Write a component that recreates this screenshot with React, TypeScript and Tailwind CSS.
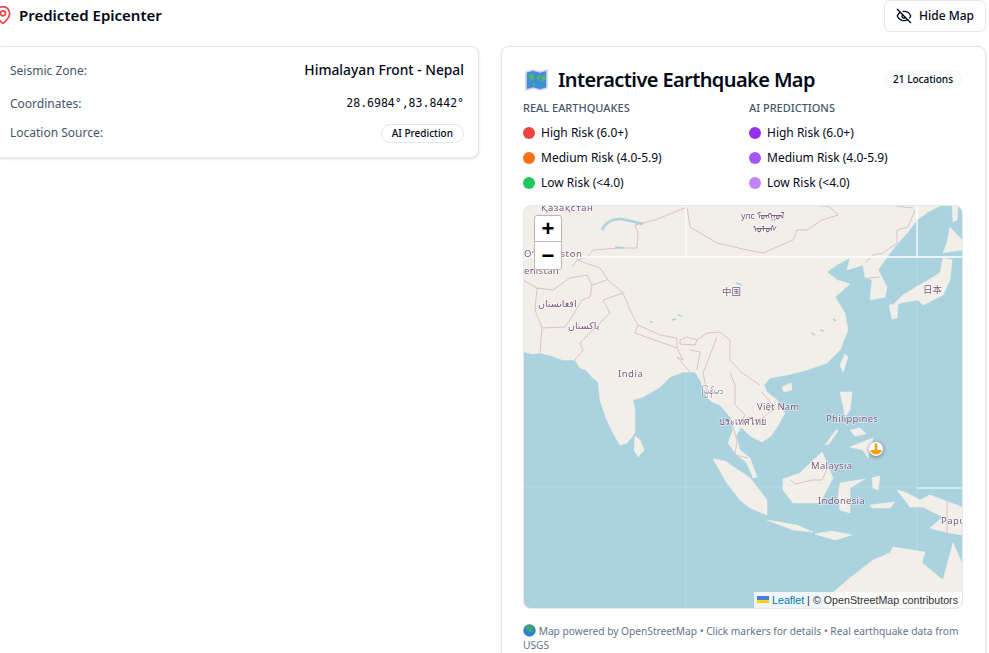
import { EyeOff, MapPin } from "lucide-react";

const realLegend = [
  { label: "High Risk (6.0+)", color: "bg-[#ef4444]" },
  { label: "Medium Risk (4.0-5.9)", color: "bg-[#f97316]" },
  { label: "Low Risk (<4.0)", color: "bg-[#22c55e]" },
];

const aiLegend = [
  { label: "High Risk (6.0+)", color: "bg-[#9333ea]" },
  { label: "Medium Risk (4.0-5.9)", color: "bg-[#a855f7]" },
  { label: "Low Risk (<4.0)", color: "bg-[#c084fc]" },
];

const land = [
  // mainland asia
  "M524 352 L532 354 L540 353 L552 356 L563 360 L575 360 L580 368 L586 370 L592 377 L598 382 L600 400 L606 418 L613 433 L620 445 L627 443 L632 437 L635 432 L635 410 L633 400 L643 397 L652 392 L660 387 L670 377 L683 372 L695 372 L700 380 L704 390 L707 397 L712 402 L720 405 L726 412 L730 417 L733 430 L728 443 L737 455 L747 463 L753 478 L757 477 L750 458 L740 450 L736 436 L741 427 L750 436 L762 442 L771 436 L777 427 L785 413 L777 400 L767 392 L764 385 L770 378 L787 375 L807 370 L827 363 L840 350 L848 330 L845 313 L835 297 L843 290 L850 284 L837 280 L827 272 L838 264 L850 258 L847 270 L863 265 L865 277 L872 280 L870 300 L885 297 L887 287 L878 270 L890 253 L898 243 L908 232 L917 220 L928 212 L940 206 L524 206 Z",
  // sakhalin, hokkaido
  "M952 206 L958 206 L957 220 L953 222 Z",
  "M950 227 L962 240 L962 250 L943 253 L947 243 Z",
  // honshu, kyushu
  "M943 258 L952 260 L950 280 L943 295 L923 305 L918 300 L905 302 L893 305 L903 295 L923 283 L940 273 Z",
  "M889 305 L898 304 L897 318 L892 319 Z",
  // taiwan, hainan
  "M845 354 L848 357 L843 372 L840 365 Z",
  "M782 387 L791 383 L792 390 L784 392 Z",
  // luzon, palawan, visayas, mindanao
  "M840 392 L852 392 L850 410 L845 417 L843 405 Z",
  "M825 445 L836 430 L838 431 L829 444 Z",
  "M850 430 L860 428 L866 434 L855 436 Z",
  "M850 447 L873 438 L868 458 L863 450 Z",
  // sri lanka, sumatra
  "M635 436 L640 440 L644 450 L638 457 L634 450 Z",
  "M713 459 L725 461 L750 478 L767 500 L767 515 L750 508 L740 500 L727 483 Z",
  // borneo, sulawesi
  "M783 479 L800 473 L822 452 L833 478 L820 503 L793 503 L783 490 Z",
  "M840 483 L865 479 L850 488 L850 513 L840 510 L838 497 Z",
  // java, lesser sunda
  "M767 520 L797 525 L813 532 L793 530 Z",
  "M815 534 L832 531 L852 535 L835 540 Z",
  "M872 478 L880 476 L878 490 L873 488 Z",
  "M870 505 L895 502 L890 508 L872 508 Z",
  // new guinea
  "M897 490 L907 493 L920 500 L930 495 L962 507 L962 535 L950 533 L937 530 L930 528 L943 517 L923 507 L910 507 Z",
  // australia
  "M830 595 L850 578 L873 560 L890 553 L893 547 L925 552 L922 563 L943 580 L953 543 L962 563 L962 609 L830 609 Z",
];

const borders = [
  "M587 257 L593 250 L620 248 L637 248 L638 233 L635 225 L655 220 L687 207 L690 227 L717 243 L747 250 L763 253 L793 240 L797 230 L807 230 L822 220 L838 215 L830 207 L817 205",
  "M895 206 L913 208 M915 210 L908 227 L897 230 L897 243 L883 253 L873 255 L865 263",
  "M572 267 L577 260 L587 257",
  "M523 280 L537 288 L553 290 L570 278 L587 275 L592 285 L607 280",
  "M577 260 L600 268 L608 280 L623 293 L603 300 L610 313 L580 343 L583 350 L575 360",
  "M592 285 L590 297 L582 300 L573 315 L565 327 L542 328",
  "M537 288 L535 310 L542 328 L540 353",
  "M623 293 L630 310 L638 325 L635 333 L677 348 L677 338 L660 335 L638 325",
  "M680 340 L687 337 L697 340 L695 345 L680 344 Z",
  "M697 340 L707 333 L720 332 L730 340 L730 360 L742 373 L760 385",
  "M717 337 L703 373 L707 392",
  "M677 348 L683 360 L677 357 L690 372 M690 350 L700 352 L697 370",
  "M730 372 L735 385 L735 405 L745 415 L742 420 L760 420 L775 408 L762 392",
  "M730 417 L737 440 L735 455 L748 458",
  "M791 480 L795 484 L812 480 L822 480 L828 467",
  "M947 501 L947 535",
  "M868 278 L880 277",
];

function EmojiMap() {
  return (
    <svg width="26" height="24" viewBox="0 0 26 24" className="shrink-0">
      <path d="M3 4 L10 2 L17 4 L24 2 L24 20 L17 22 L10 20 L3 22 Z" fill="#3d8fd6" stroke="#d9d2ee" strokeWidth="1.6" />
      <path d="M5 7 L10 6 L12 9 L9 13 L7 11 Z M14 8 L17 7 L17 11 L15 13 Z M18 9 L22 7 L23 11 L19 14 Z M10 15 L12 15 L12 18 L10 18 Z" fill="#52b56f" />
    </svg>
  );
}

function EmojiGlobe() {
  return (
    <svg width="13" height="13" viewBox="0 0 12 12" className="inline-block align-[-2px]">
      <circle cx="6" cy="6" r="5.7" fill="#2f7fd8" />
      <path d="M3 1.5 L7 0.8 L10 3.5 L9 7 L6 8 L4 6 L2 5 Z" fill="#3fa56a" />
    </svg>
  );
}

function QuakeMap() {
  return (
    <div className="relative h-[404px] w-full overflow-hidden rounded-lg border border-[#e2e8f0] bg-[#aad3df]">
      <svg viewBox="524 206 438 402" className="h-full w-full blur-[0.35px]">
        {land.map((d, i) => (
          <path key={i} d={d} fill="#f2efe9" stroke="#f2efe9" strokeWidth="0.6" strokeLinejoin="round" />
        ))}
        <path d="M602 230 Q607 218 622 219 L643 224" fill="none" stroke="#aad3df" strokeWidth="2.5" />
        <path d="M615 247 L625 248 M736 283 L742 285 M678 315 L682 316 M650 322 L653 322 M672 320 L676 319 M820 330 L824 331 M833 319 L836 321 M811 333 L815 335" fill="none" stroke="#aad3df" strokeWidth="1.5" />
        {borders.map((d, i) => (
          <path key={i} d={d} fill="none" stroke="#d3bccd" strokeWidth="0.9" strokeLinejoin="round" />
        ))}
        <path d="M686 206 L686 257 M524 257 L962 257 M917 206 L917 257" stroke="#ffffff" strokeWidth="1.3" />
        <path d="M686 257 L686 609 M917 257 L917 609 M524 487 L917 487" stroke="#ffffff" strokeWidth="0.5" opacity="0.35" />
        <path d="M917 488 L962 488" stroke="#d6f6f8" strokeWidth="1.6" />
        <g fill="#7b5a7d" stroke="#ffffff" strokeOpacity="0.6" strokeWidth="1.4" paintOrder="stroke" fontFamily="'Noto Sans', 'DejaVu Sans', 'Noto Sans CJK SC', sans-serif" fontSize="9.5">
          <text x="541" y="211" letterSpacing="0.6">Қазақстан</text>
          <text x="524" y="257" letterSpacing="0.6">Oʻzbekiston</text>
          <text x="524" y="274" letterSpacing="0.3">enistan</text>
          <text x="538" y="307">افغانستان</text>
          <text x="568" y="329">پاکستان</text>
          <text x="618" y="377" letterSpacing="0.5">India</text>
          <text x="702" y="394">မြန်မာ</text>
          <text x="719" y="425" fontSize="9">ประเทศไทย</text>
          <text x="757" y="410" letterSpacing="0.2">Việt Nam</text>
          <text x="722" y="295">中国</text>
          <text x="923" y="293">日本</text>
          <text x="826" y="422" letterSpacing="0.3">Philippines</text>
          <text x="811" y="469" letterSpacing="0.3">Malaysia</text>
          <text x="818" y="504" letterSpacing="0.3">Indonesia</text>
          <text x="941" y="524" letterSpacing="0.5">Papu</text>
          <text x="741" y="219" fontSize="9">улс ᠮᠣᠩᠭᠣᠯ</text>
          <text x="753" y="232" fontSize="9">ᠤᠯᠤᠰ</text>
        </g>
      </svg>

      <div className="absolute left-[10px] top-[9px] flex w-[28px] flex-col overflow-hidden rounded-[3px] border border-[#b9b9b9] bg-white text-black">
        <div className="flex h-[26px] items-center justify-center border-b border-[#b9b9b9] font-['Liberation_Sans',sans-serif] text-[22px] font-bold leading-none">+</div>
        <div className="flex h-[27px] items-center justify-center font-['Liberation_Sans',sans-serif] text-[22px] font-bold leading-none">−</div>
      </div>

      <svg width="16" height="16" viewBox="0 0 16 16" className="absolute left-[344px] top-[235px] drop-shadow-[0_1px_2px_rgba(0,0,0,0.45)]">
        <circle cx="8" cy="8" r="7" fill="#ffffff" />
        <path d="M2.2 9 H13.8 A6 6 0 0 1 2.2 9 Z" fill="#f59e0b" />
        <path d="M6.7 2.5 H9.3 V10 H6.7 Z" fill="#f59e0b" />
      </svg>

      <div className="absolute bottom-0 right-0 flex items-center bg-white/80 pl-[3px] pr-[4px] font-['Liberation_Sans',sans-serif] text-[10.7px] leading-[16px] text-[#333333]">
        <svg width="12" height="8" viewBox="0 0 12 8" className="mr-[3px]">
          <path d="M0 0h12v4H0z" fill="#4C7BE1" />
          <path d="M0 4h12v3H0z" fill="#FFD500" />
        </svg>
        <span className="text-[#0078a8]">Leaflet</span>
        <span className="mx-[3px]">|</span>
        <span>© OpenStreetMap contributors</span>
      </div>
    </div>
  );
}

export default function App() {
  return (
    <div className="h-[653px] overflow-hidden bg-white font-['Noto_Sans',sans-serif] text-[#020817]">
      <div className="-ml-[6px] w-[992px]">
        <div className="flex h-[32px] items-center justify-between">
          <div className="-mt-[1px] flex items-center gap-[6px] -ml-[1px]">
            <MapPin size={20} strokeWidth={2} className="-mt-[2px] text-[#ef4444]" />
            <h3 className="text-[15px] font-semibold">Predicted Epicenter</h3>
          </div>
          <button className="flex h-[32px] items-center gap-[7px] rounded-md border border-[#e2e8f0] bg-white px-[11px] text-[12px] font-medium">
            <EyeOff size={16} />
            Hide Map
          </button>
        </div>

        <div className="mt-[14px] grid grid-cols-[485px_485px] gap-[22px]">
          <div className="h-[112px] rounded-lg border border-[#e2e8f0] bg-white px-[14px] py-[11px] shadow-sm">
            <div className="flex h-[25px] items-center justify-between pl-[1px]">
              <span className="text-[12px] text-[#475569]">Seismic Zone:</span>
              <span className="text-[13.8px] font-medium">Himalayan Front - Nepal</span>
            </div>
            <div className="mt-[8px] flex h-[25px] items-center justify-between pl-[1px]">
              <span className="text-[12px] text-[#475569]">Coordinates:</span>
              <span className="font-['DejaVu_Sans_Mono',monospace] text-[11.5px]">28.6984°,83.8442°</span>
            </div>
            <div className="mt-[7px] flex h-[20px] items-center justify-between pl-[1px]">
              <span className="text-[12px] text-[#475569]">Location Source:</span>
              <span className="rounded-full border border-[#e2e8f0] px-[10px] py-[1px] text-[10px] font-medium">AI Prediction</span>
            </div>
          </div>

          <div className="h-[640px] rounded-lg border border-[#e2e8f0] bg-white pl-[21px] pr-[22px] pt-[19px] shadow-sm">
            <div className="flex items-center justify-between">
              <div className="flex items-center gap-[9px]">
                <EmojiMap />
                <h2 className="text-[20px] font-semibold leading-[28px] tracking-[-0.6px]">Interactive Earthquake Map</h2>
              </div>
              <span className="-mt-[1px] rounded-full bg-[#f8fafc] px-[10px] py-[2px] text-[10px] font-medium">21 Locations</span>
            </div>

            <div className="mt-[7px] grid grid-cols-[226px_1fr]">
              {[
                { title: "REAL EARTHQUAKES", items: realLegend },
                { title: "AI PREDICTIONS", items: aiLegend },
              ].map((group) => (
                <div key={group.title}>
                  <div className="text-[11px] font-medium leading-[14px] text-[#475569]">{group.title}</div>
                  <div className="mt-[5px] flex flex-col">
                    {group.items.map((item) => (
                      <div key={item.label} className="flex h-[25px] items-center gap-[6px] text-[12px]">
                        <span className={`h-[12px] w-[12px] rounded-full ${item.color}`} />
                        {item.label}
                      </div>
                    ))}
                  </div>
                </div>
              ))}
            </div>

            <div className="mt-[10px]">
              <QuakeMap />
            </div>

            <p className="mt-[15px] text-[10.2px] leading-[14px] text-[#64748b]">
              <EmojiGlobe />{" "}
              Map powered by OpenStreetMap • Click markers for details • Real earthquake data from USGS
            </p>
          </div>
        </div>
      </div>
    </div>
  );
}
